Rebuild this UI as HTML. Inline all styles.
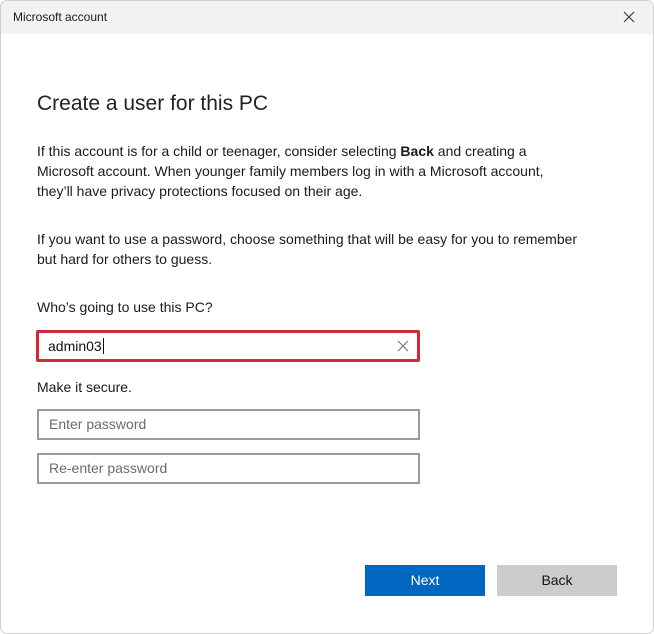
<!DOCTYPE html><html><head><style>
body{margin:0;width:654px;height:634px;background:#fff;font-family:"Liberation Sans",sans-serif;color:#1a1a1a;overflow:hidden;position:relative}
.win{position:absolute;left:0;top:0;width:652px;height:632px;border:1px solid #cfcfcf;border-radius:7px;overflow:hidden}
.tb{height:33px;background:#f2f2f2;font-size:12px;line-height:33px;padding-left:12px;position:relative}
.x{position:absolute;right:18px;top:10px}
.a{position:absolute;left:36px;font-size:14px;line-height:20px}
.box{position:absolute;left:36px;height:27px;border:2px solid #9a9a9a;font-size:14px;line-height:27px;padding-left:10px;color:#6b6b6b;width:369px}
.btn{position:absolute;top:564px;width:120px;height:31px;font-size:14px;line-height:31px;text-align:center}
</style></head><body><div class="win">
<div class="tb">Microsoft account<svg class="x" width="12" height="12" viewBox="0 0 12 12"><path d="M1 1L11 11M11 1L1 11" stroke="#333" stroke-width="1.1"/></svg></div>
<div class="a" style="top:88px;font-size:21px;line-height:30px;font-weight:300;color:#222">Create a user for this PC</div>
<div class="a" style="top:140px;width:590px">If this account is for a child or teenager, consider selecting <b>Back</b> and creating a<br>Microsoft account. When younger family members log in with a Microsoft account,<br>they’ll have privacy protections focused on their age.</div>
<div class="a" style="top:228px;width:590px">If you want to use a password, choose something that will be easy for you to remember<br>but hard for others to guess.</div>
<div class="a" style="top:296px">Who’s going to use this PC?</div>
<div style="position:absolute;left:35px;top:329px;width:369px;height:26px;border:3px solid #cf2a36;border-radius:2px;font-size:14px;line-height:26px;padding-left:9px;color:#111">admin03<span style="border-left:1px solid #111;margin-left:1px"></span><svg style="position:absolute;right:8px;top:7px" width="12" height="12" viewBox="0 0 12 12"><path d="M1 1L11 11M11 1L1 11" stroke="#777" stroke-width="1.2"/></svg></div>
<div class="a" style="top:376px">Make it secure.</div>
<div class="box" style="top:408px">Enter password</div>
<div class="box" style="top:452px">Re-enter password</div>
<div class="btn" style="left:364px;background:#0067c0;color:#fff">Next</div>
<div class="btn" style="left:496px;background:#cccccc;color:#111">Back</div>
</div></body></html>
